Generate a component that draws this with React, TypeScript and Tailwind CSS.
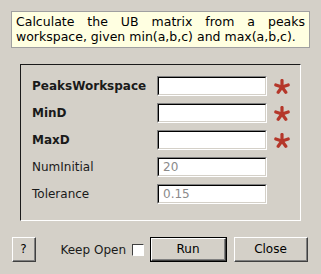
import React from 'react';

const font = { fontFamily: '"DejaVu Sans", Verdana, sans-serif' };

function Star() {
  return (
    <svg width="16" height="15" viewBox="0 0 16 15" className="shrink-0">
      <g stroke="#b5372a" strokeWidth="3.2" strokeLinecap="round">
        <line x1="8" y1="8" x2="8" y2="1.5" />
        <line x1="8" y1="8" x2="14.2" y2="6" />
        <line x1="8" y1="8" x2="11.8" y2="13.3" />
        <line x1="8" y1="8" x2="4.2" y2="13.3" />
        <line x1="8" y1="8" x2="1.8" y2="6" />
      </g>
    </svg>
  );
}

function Field({ value }: { value?: string }) {
  return (
    <div className="w-[110px] h-[20px] border-t border-l border-[#808080] border-b-white border-r-white border-b border-r">
      <div className="h-full border-t border-l border-black border-b border-r border-b-[#d4d0c8] border-r-[#d4d0c8] bg-white pl-[4px] text-[12px] leading-[16px] text-[#8a8a8a]">
        {value}
      </div>
    </div>
  );
}

function Btn({ children, width, isDefault }: { children: React.ReactNode; width: string; isDefault?: boolean }) {
  const inner = (
    <div className="h-full border-t border-l border-white border-b border-r border-b-[#404040] border-r-[#404040]">
      <div className="h-full flex items-center justify-center border-b border-r border-[#808080] text-[12px] text-black">
        {children}
      </div>
    </div>
  );
  return (
    <div className={`${width} h-[25px] ${isDefault ? 'border border-black' : ''}`}>{inner}</div>
  );
}

const rows = [
  { label: 'PeaksWorkspace', bold: true, star: true },
  { label: 'MinD', bold: true, star: true },
  { label: 'MaxD', bold: true, star: true },
  { label: 'NumInitial', value: '20' },
  { label: 'Tolerance', value: '0.15' },
];

export default function App() {
  return (
    <div className="w-[321px] h-[274px] bg-[#d4d0c8] pt-[11px]" style={font}>
      <div className="ml-[11px] w-[299px] h-[37px] bg-[#ffffe1] border border-[#a0a0a0] px-[4px] pt-[2px] text-[12.5px] leading-[15px] text-black text-justify">
        Calculate the UB matrix from a peaks workspace, given min(a,b,c) and max(a,b,c).
      </div>

      <div className="ml-[20px] mt-[16px] w-[281px] h-[157px] border-t border-l border-[#1a1a1a] border-b border-r border-b-white border-r-white pl-[11px] pt-[11px]">
        <div className="flex flex-col gap-[7px]">
          {rows.map((r) => (
            <div key={r.label} className="flex items-center h-[20px]">
              <div className={`w-[125px] text-[12px] text-[#1a1a1a] ${r.bold ? 'font-bold' : ''}`}>{r.label}</div>
              <Field value={r.value} />
              {r.star && (
                <div className="ml-[7px]">
                  <Star />
                </div>
              )}
            </div>
          ))}
        </div>
      </div>

      <div className="flex items-center mt-[16px] ml-[12px] mr-[13px] h-[25px]">
        <Btn width="w-[24px]">?</Btn>
        <div className="ml-auto flex items-center">
          <span className="text-[12px] text-[#1a1a1a]">Keep Open</span>
          <div className="ml-[6px] w-[12px] h-[12px] bg-white border-t border-l border-[#404040] border-b border-r border-b-white border-r-white" />
          <div className="ml-[6px]">
            <Btn width="w-[77px]" isDefault>
              Run
            </Btn>
          </div>
          <div className="ml-[7px]">
            <Btn width="w-[74px]">Close</Btn>
          </div>
        </div>
      </div>
    </div>
  );
}
